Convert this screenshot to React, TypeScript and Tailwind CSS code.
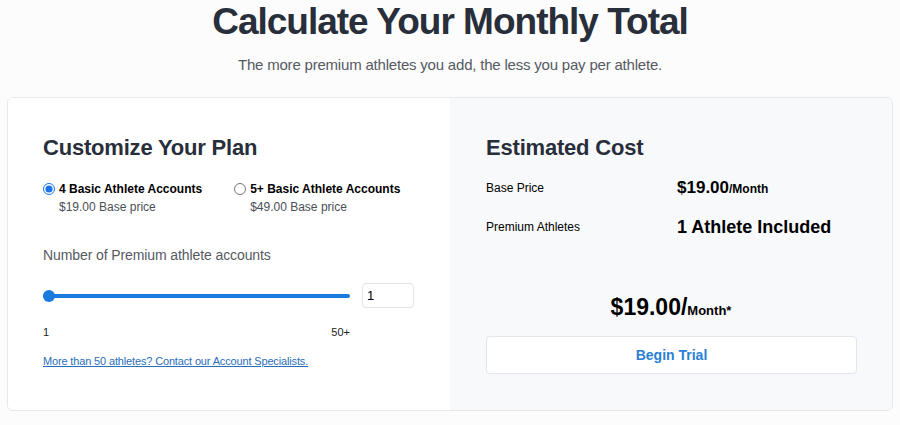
import React, { useState } from 'react';

const font = { fontFamily: '"Liberation Sans", Arial, sans-serif' };

export default function App() {
  const [plan, setPlan] = useState<'basic4' | 'basic5'>('basic4');
  const [count, setCount] = useState(1);

  const basePrice = plan === 'basic4' ? 19 : 49;

  return (
    <div className="h-[425px] w-[900px] overflow-hidden bg-[#fcfcfc] text-[#2a2f3a]" style={font}>
      <h1 className="mt-[3px] text-center text-[37px] font-bold leading-none tracking-[-1px] text-[#282e3a]">
        Calculate Your Monthly Total
      </h1>
      <p className="mt-[15px] text-center text-[15px] leading-5 tracking-[-0.2px] text-[#555a62]">
        The more premium athletes you add, the less you pay per athlete.
      </p>

      <div className="mx-[7px] mt-[22px] grid h-[314px] w-[886px] grid-cols-2 overflow-hidden rounded-md border border-[#e6e8eb]">
        {/* Left: plan options */}
        <div className="bg-white pl-[35px] pr-8 pt-[38px]">
          <h2 className="text-[22px] font-bold leading-6 tracking-[-0.2px] text-[#282e3a]">Customize Your Plan</h2>

          <div className="mt-[21px] flex gap-[32px]">
            {[
              { id: 'basic4' as const, label: '4 Basic Athlete Accounts', price: '$19.00 Base price' },
              { id: 'basic5' as const, label: '5+ Basic Athlete Accounts', price: '$49.00 Base price' },
            ].map((opt) => (
              <label key={opt.id} className="flex cursor-pointer items-start gap-[4px] whitespace-nowrap">
                <input
                  type="radio"
                  name="plan"
                  checked={plan === opt.id}
                  onChange={() => setPlan(opt.id)}
                  className="mt-[2px] h-[12px] w-[12px] accent-[#1a73e8]"
                />
                <span className="flex flex-col">
                  <span className="text-[12px] font-bold leading-4 text-black">{opt.label}</span>
                  <span className="mt-[2px] text-[12px] leading-4 text-[#4a4f57]">{opt.price}</span>
                </span>
              </label>
            ))}
          </div>

          <p className="mt-[30px] text-[14px] leading-5 tracking-[-0.1px] text-[#555a62]">Number of Premium athlete accounts</p>

          <div className="mt-[18px] flex items-center gap-3">
            <div className="relative flex h-4 w-[307px] items-center">
              <div className="h-[4px] w-full rounded-full bg-[#1a7ae0]" />
              <div
                className="absolute top-1/2 h-[12px] w-[12px] -translate-y-1/2 rounded-full bg-[#1a7ae0]"
                style={{ left: `${((count - 1) / 49) * 295}px` }}
              />
            </div>
            <input
              type="text"
              value={count}
              onChange={(e) => setCount(Math.max(1, Math.min(50, Number(e.target.value) || 1)))}
              className="h-[25px] w-[52px] rounded-[4px] border border-[#e2e4e8] bg-white px-[4px] text-[13px] text-black outline-none"
            />
          </div>

          <div className="mt-[16px] flex w-[307px] justify-between text-[11px] leading-4 text-[#222]">
            <span>1</span>
            <span>50+</span>
          </div>

          <a href="#" className="mt-[13px] block text-[11px] leading-4 tracking-[-0.15px] text-[#2a6ebb] underline">
            More than 50 athletes? Contact our Account Specialists.
          </a>
        </div>

        {/* Right: estimate */}
        <div className="flex flex-col bg-[#f8f9fb] pl-9 pr-9 pt-[38px]">
          <h2 className="text-[22px] font-bold leading-6 tracking-[-0.2px] text-[#282e3a]">Estimated Cost</h2>

          <div className="mt-[15px] grid grid-cols-[191px_1fr] items-center">
            <span className="text-[12px] text-black">Base Price</span>
            <span className="font-bold text-black">
              <span className="text-[17px]">${basePrice.toFixed(2)}</span>
              <span className="text-[12px]">/Month</span>
            </span>
          </div>
          <div className="mt-[13px] grid grid-cols-[191px_1fr] items-center">
            <span className="text-[12px] text-black">Premium Athletes</span>
            <span className="text-[18px] font-bold text-black">
              {count} Athlete{count > 1 ? 's' : ''} Included
            </span>
          </div>

          <div className="mt-[49px] text-center font-bold text-black">
            <span className="text-[23px]">${basePrice.toFixed(2)}/</span>
            <span className="text-[13px]">Month*</span>
          </div>

          <button className="mt-[12px] h-[38px] w-[371px] rounded-[4px] border border-[#e2e5ea] bg-white text-[14px] font-bold text-[#2a7fd4]">
            Begin Trial
          </button>
        </div>
      </div>
    </div>
  );
}
